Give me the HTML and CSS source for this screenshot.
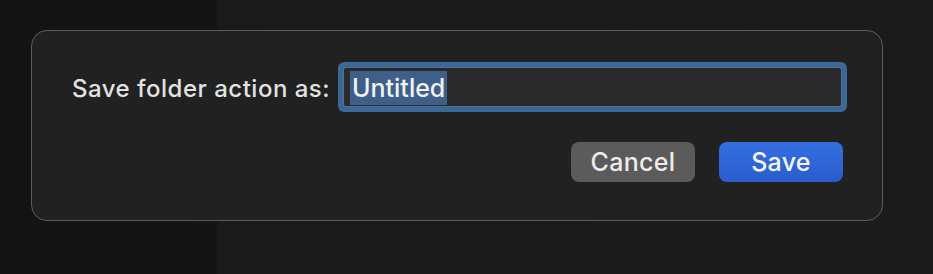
FILE: index.html
```html
<!DOCTYPE html>
<html>
<head>
<meta charset="utf-8">
<link rel="stylesheet" href="styles.css">
</head>
<body>
<div class="dialog">
  <div class="row">
    <label class="label">Save folder action as:</label>
    <div class="field"><span class="sel">Untitled</span></div>
  </div>
  <div class="actions">
    <button class="btn cancel">Cancel</button>
    <button class="btn save">Save</button>
  </div>
</div>
</body>
</html>
```

FILE: styles.css
```css
html, body {
  margin: 0;
  height: 100%;
}
body {
  background: linear-gradient(to right, #131313 0, #141414 216px, #1a1a1a 220px, #1b1b1b 100%);
  padding: 30px 0 0 31px;
  box-sizing: border-box;
  font-family: Inter, "Noto Sans", sans-serif;
}
.dialog {
  width: 852px;
  height: 191px;
  box-sizing: border-box;
  background: #212121;
  border: 1px solid #5c5c5c;
  border-radius: 16px;
  padding: 37px 39px 38px 40px;
  display: flex;
  flex-direction: column;
  gap: 36px;
}
.row {
  display: flex;
  align-items: center;
  height: 38px;
}
.label {
  color: #e2e2e2;
  font-size: 24px;
  font-weight: 500;
  letter-spacing: 0.5px;
  padding-top: 2px;
  width: 272px;
  flex: none;
}
.field {
  flex: 1;
  height: 38px;
  box-sizing: border-box;
  background: #2a2a2a;
  box-shadow: 0 0 0 1px #4d7196, 0 0 0 6px #3c6898;
  border-radius: 2px;
  padding: 1px 0 0 6px;
  display: flex;
  align-items: center;
  margin-right: 2px;
}
.sel {
  background: #3e5f8a;
  color: #f2f2f2;
  font-size: 25px;
  font-weight: 500;
  height: 34px;
  line-height: 34px;
  padding: 0 2px;
}
.actions {
  display: flex;
  justify-content: flex-end;
  gap: 24px;
}
.btn {
  width: 124px;
  height: 40px;
  border: none;
  border-radius: 8px;
  font-family: Inter, "Noto Sans", sans-serif;
  font-size: 25px;
  font-weight: 500;
  letter-spacing: 0.3px;
  color: #ececec;
  padding: 0;
}
.cancel {
  background: #5b5b5b;
}
.save {
  background: linear-gradient(#3470e0, #2a5ccd);
  color: #f4f6fb;
}
```
